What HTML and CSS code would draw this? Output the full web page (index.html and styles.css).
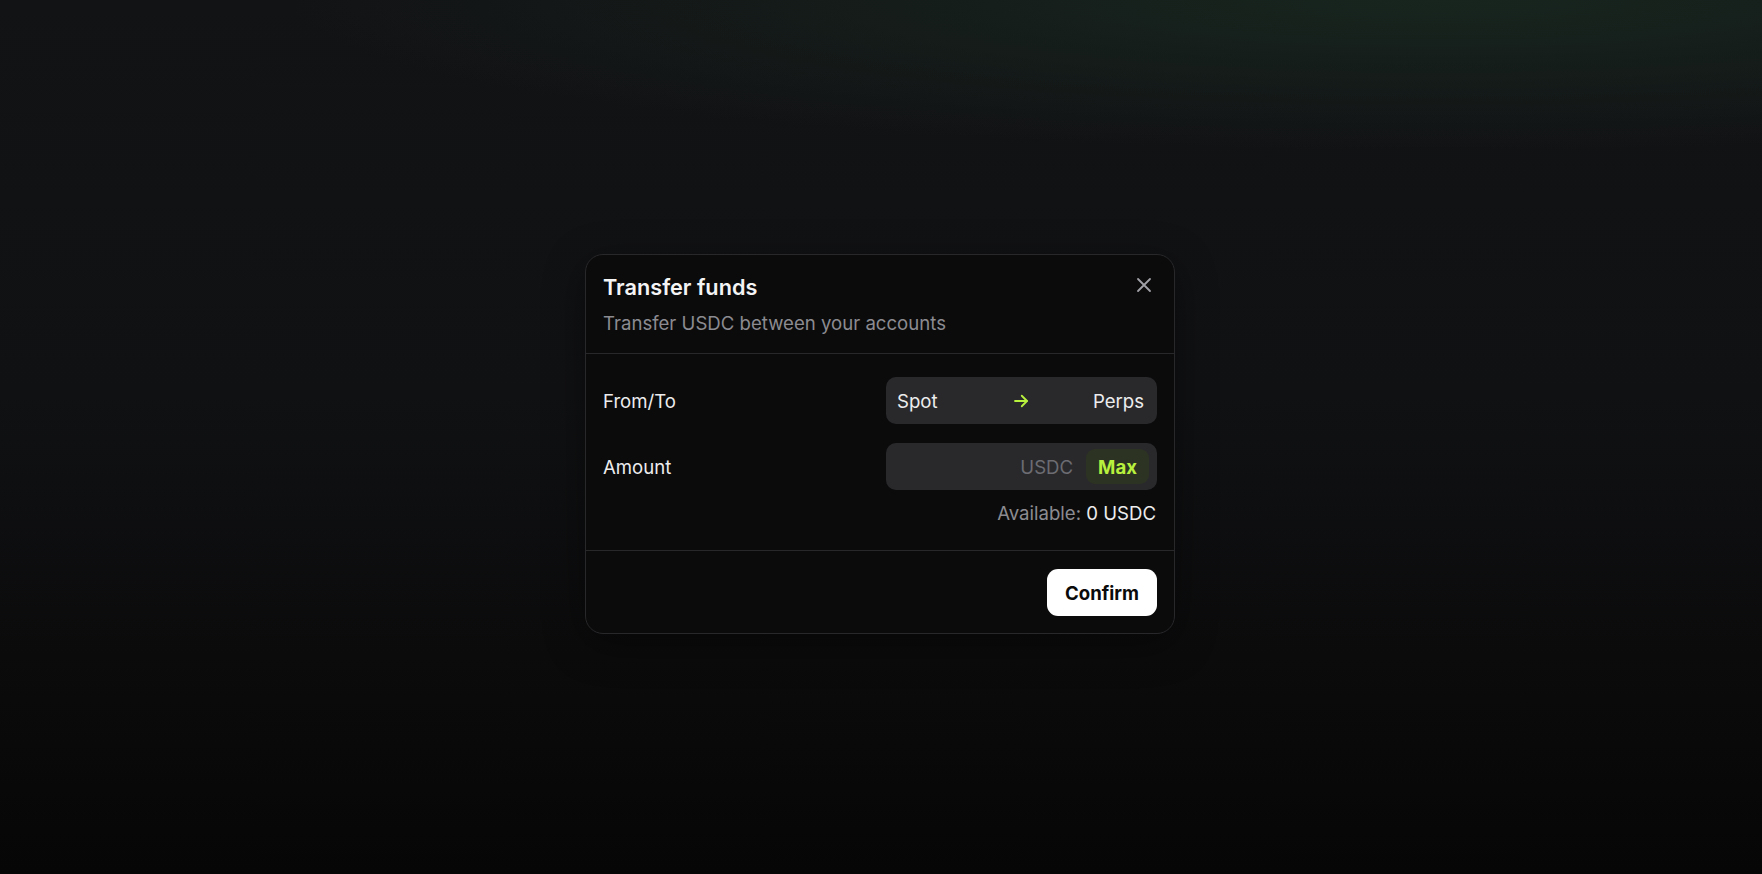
FILE: index.html
```html
<!DOCTYPE html>
<html lang="en">
<head>
	<meta charset="UTF-8">
	<meta name="viewport" content="width=device-width, initial-scale=1">
	<title>Transfer funds</title>
	<link rel="stylesheet" href="styles.css">
</head>
<body>
	<div class="overlay">
		<div class="modal" role="dialog" aria-labelledby="modalTitle">
			<div class="modal-header">
				<div class="modal-heading">
					<h2 id="modalTitle">Transfer funds</h2>
					<p>Transfer USDC between your accounts</p>
				</div>
				<button class="close-btn" type="button" aria-label="Close">
					<svg width="16" height="16" viewBox="0 0 16 16" fill="none" stroke="currentColor" stroke-width="1.8" stroke-linecap="round">
						<path d="M2 2 L14 14 M14 2 L2 14"/>
					</svg>
				</button>
			</div>

			<div class="modal-body">
				<div class="field-row">
					<span class="field-label">From/To</span>
					<button class="pill route" type="button">
						<span>Spot</span>
						<svg class="arrow" width="18" height="18" viewBox="0 0 24 24" fill="none" stroke="currentColor" stroke-width="2.4" stroke-linecap="round" stroke-linejoin="round">
							<path d="M4 12h16"/>
							<path d="M13 5l7 7-7 7"/>
						</svg>
						<span class="to">Perps</span>
					</button>
				</div>
				<div class="field-row field-row--last">
					<label class="field-label" for="amount">Amount</label>
					<div class="pill amount">
						<input type="text" id="amount" inputmode="decimal" autocomplete="off">
						<span class="unit">USDC</span>
						<button class="max-btn" type="button">Max</button>
					</div>
				</div>
				<div class="available">Available: <span>0 USDC</span></div>
			</div>

			<div class="modal-footer">
				<button class="confirm-btn" type="button">Confirm</button>
			</div>
		</div>
	</div>
</body>
</html>
```

FILE: styles.css
```css
:root {
	--accent: #b8f03e;
	--text-color: #ededee;
	--muted: #8b8b91;
	--border-color: #28282b;
	--pill-bg: #29292c;
	--modal-bg: #0b0b0c;
}

* {
	box-sizing: border-box;
}

body {
	font-family: Inter, "Noto Sans", Arial, sans-serif;
	margin: 0;
	padding: 0;
	height: 874px;
	overflow: hidden;
	color: var(--text-color);
	background:
		radial-gradient(ellipse 1150px 150px at 1440px 0, rgba(24, 38, 31, 0.95), transparent 100%),
		linear-gradient(180deg, #121315 0%, #101113 45%, #0b0b0c 75%, #060606 100%);
}

.overlay {
	height: 100%;
	display: flex;
	align-items: center;
	justify-content: center;
	padding-top: 14px;
	padding-right: 2px;
}

.modal {
	width: 590px;
	background: var(--modal-bg);
	border: 1px solid var(--border-color);
	border-radius: 18px;
	box-shadow: 0 10px 40px rgba(0, 0, 0, 0.4);
}

.modal-header {
	display: flex;
	align-items: flex-start;
	justify-content: space-between;
	padding: 18px 18px 16px 17px;
	border-bottom: 1px solid var(--border-color);
}

.modal-heading h2 {
	margin: 0 0 8px;
	font-size: 21.7px;
	line-height: 28px;
	font-weight: 600;
	color: #f4f4f5;
}

.modal-heading p {
	margin: 0;
	font-size: 18.6px;
	line-height: 28px;
	color: var(--muted);
}

.close-btn {
	width: 24px;
	height: 24px;
	margin-top: 0;
	margin-right: 0;
	padding: 0;
	border: none;
	background: none;
	color: #a1a1a8;
	display: flex;
	align-items: center;
	justify-content: center;
	cursor: pointer;
}

.modal-body {
	padding: 23px 18px 23px 17px;
	border-bottom: 1px solid var(--border-color);
}

.field-row {
	display: flex;
	align-items: center;
	justify-content: space-between;
	margin-bottom: 19px;
}

.field-row--last {
	margin-bottom: 9px;
}

.field-label {
	font-size: 18.6px;
	line-height: 28px;
	color: var(--text-color);
}

.pill {
	width: 271px;
	height: 47px;
	margin-right: -1px;
	background: var(--pill-bg);
	border: none;
	border-radius: 10px;
	font-family: inherit;
	font-size: 18.6px;
	color: var(--text-color);
}

.route {
	display: grid;
	grid-template-columns: 1fr auto 1fr;
	align-items: center;
	padding: 0 13px 0 11px;
	text-align: left;
	cursor: pointer;
}

.route .arrow {
	color: var(--accent);
}

.route .to {
	justify-self: end;
}

.amount {
	display: flex;
	align-items: center;
	padding: 0 8px 0 12px;
}

.amount input {
	flex: 1;
	min-width: 0;
	background: transparent;
	border: none;
	outline: none;
	font-family: inherit;
	font-size: 18.6px;
	color: var(--text-color);
}

.amount .unit {
	color: #6c6c72;
	margin-right: 13px;
}

.max-btn {
	height: 35px;
	padding: 0 12px;
	border: none;
	border-radius: 9px;
	background: #2d3323;
	color: var(--accent);
	font-family: inherit;
	font-size: 18.6px;
	font-weight: 700;
	cursor: pointer;
}

.available {
	text-align: right;
	font-size: 18.6px;
	line-height: 28px;
	color: var(--muted);
}

.available span {
	color: var(--text-color);
}

.modal-footer {
	display: flex;
	justify-content: flex-end;
	padding: 18px 17px 17px;
}

.confirm-btn {
	height: 47px;
	padding: 0 18px;
	border: none;
	border-radius: 11px;
	background: #fff;
	color: #0a0a0a;
	font-family: inherit;
	font-size: 18.6px;
	font-weight: 700;
	cursor: pointer;
}

.confirm-btn:hover {
	background: #e8e8e8;
}
```
